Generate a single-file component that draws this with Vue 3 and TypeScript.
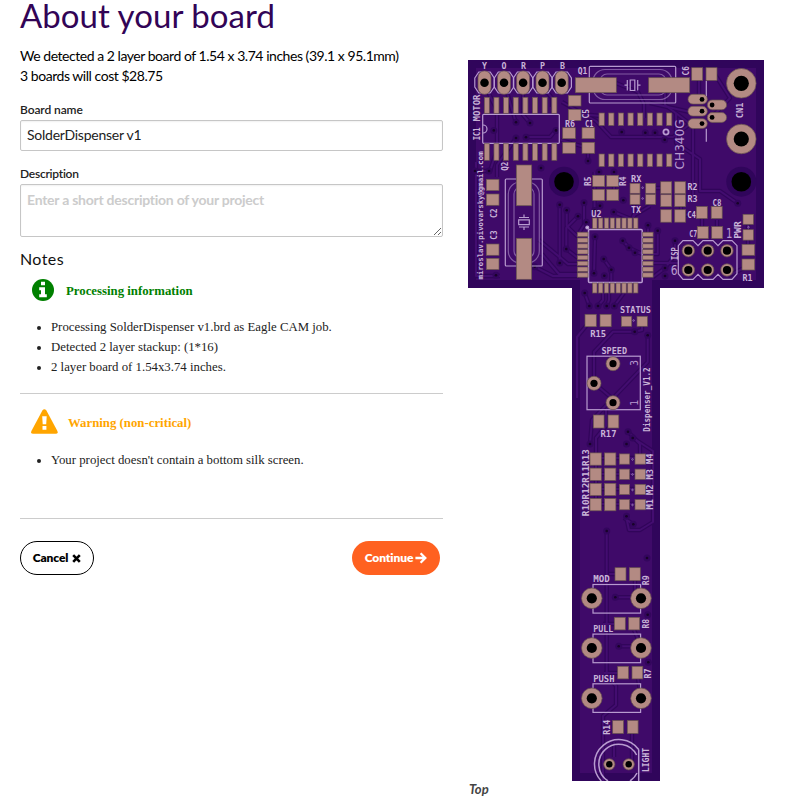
<script setup lang="ts">
import { ref } from 'vue'

const boardName = ref('SolderDispenser v1')
const description = ref('')
const information: string[] = [
  'Processing SolderDispenser v1.brd as Eagle CAM job.',
  'Detected 2 layer stackup: (1*16)',
  '2 layer board of 1.54x3.74 inches.',
]

type Box = [number, number, number, number]
const range = (n: number) => Array.from({ length: n }, (_, i) => i)

// Rectangular surface pads: x, y, width, height
const pads: Box[] = [
  ...range(8).flatMap((i): Box[] => [
    [484.3 + i * 9.65, 97.3, 5, 16], [484.3 + i * 9.65, 143.7, 5, 16.6],
    [599 + i * 9.65, 113, 5.3, 12.5], [599 + i * 9.65, 154, 5.3, 12.6],
    [592.6 + i * 5.85, 218, 4.4, 10.6], [592.6 + i * 5.85, 283, 4.4, 10],
    [577.3, 232.2 + i * 5.8, 10.7, 4.4], [642.7, 232.2 + i * 5.8, 10.4, 4.4],
  ]),
  ...range(4).flatMap((i): Box[] => [
    [590, 452.9 + i * 15.2, 11.3, 12.3], [604.6, 452.9 + i * 15.2, 11.3, 12.3],
    [619.3, 453.9 + i * 15.2, 10.3, 10.3], [635, 453.9 + i * 15.2, 10.6, 10.3],
  ]),
  [575.3, 77.7, 41, 15], [648.7, 77.7, 41, 15],
  [516.3, 165, 15.4, 40.7], [516.3, 238.3, 15.4, 41],
  [568.3, 95.3, 12.7, 10.7], [568.3, 109.3, 12.7, 11.3],
  [562.7, 127.7, 12.7, 11], [562.7, 142.3, 12.7, 11],
  [582, 127.7, 12.7, 11], [582, 142.3, 12.7, 11],
  [691.7, 67.7, 11, 12.7], [706, 67.7, 11, 12.7],
  [486.3, 179.3, 12.7, 11.3], [486.3, 194, 12.7, 11.3],
  [486.3, 244, 12.7, 11.3], [486.3, 258.3, 12.7, 11.3],
  [592.7, 175.3, 12, 11.3], [606.7, 175.3, 12, 11.3],
  [592.7, 189.3, 12, 11.3], [606.7, 189.3, 12, 11.3],
  [630, 183.3, 10, 10], [645.7, 183.3, 10, 10],
  [630, 194.4, 10, 10], [645.7, 194.4, 10, 10],
  [660.7, 181.7, 11, 12], [674.7, 181.7, 11, 12],
  [660.7, 194.7, 11, 12], [674.7, 194.7, 11, 12],
  [660.7, 209.7, 11, 12.5], [674.7, 209.7, 11, 12.5],
  [696.3, 206.5, 11, 12], [711.2, 206.5, 11, 12],
  [697.3, 226.6, 11, 12], [711.7, 226.6, 11, 12],
  [743, 214.3, 10.4, 10], [743, 229.7, 10.4, 10.4],
  [742, 244.3, 12.7, 11], [742, 259, 12.7, 11],
  [585, 314.3, 11.3, 12.4], [600, 314.3, 11.2, 12.4],
  [621.3, 316.3, 10.4, 10], [637, 316.3, 10.4, 10],
  [593.3, 415, 10.8, 13], [608, 415, 10.8, 13],
  [615, 567.7, 11, 13], [629.3, 567.7, 11, 13],
  [614.3, 617.3, 11, 12.6], [628.7, 617.3, 11, 12.6],
  [617.7, 666.3, 10.8, 12.6], [632, 666.3, 10.8, 12.6],
  [612.7, 720.5, 10.8, 13], [627.3, 720.5, 10.8, 13],
]

// Plated holes: cx, cy, ring radius, hole radius
const rings: Box[] = [
  [741.3, 83.3, 14.8, 7.6], [741.3, 139, 14.8, 7.6],
  ...[688.3, 707.7, 727].flatMap((x): Box[] => [[x, 250.7, 6.2, 4.1], [x, 270, 6.2, 4.1]]),
  [613, 363.7, 7, 3.6], [594, 383.3, 7, 3.6], [613, 402.7, 7, 3.6],
  ...[598.3, 648, 698.3].flatMap((y): Box[] => [[591.8, y, 10.3, 5.1], [641, y, 10.3, 5.1]]),
  [609.3, 764.3, 5.6, 3.2], [628.7, 764.3, 5.6, 3.2],
]
const motorPins = [484.5, 504, 523.1, 542.5, 561.7]
const usbPads: Box[] = [
  [688, 94.3, 702, 99.4], [688, 106.3, 702, 111.2], [688, 118.7, 702, 123.6],
  [707.3, 100, 712.1, 105], [707.3, 112.6, 712.1, 117.4],
]

const vias: [number, number][] = [
  [493.8, 130.4], [516, 122.3], [530, 123], [516, 138], [526, 137.3], [556, 130.4],
  [588, 161], [541, 168], [599, 172], [614, 172], [489, 171], [621.7, 132], [645.3, 132.7], [655, 132.7],
  [664.7, 139.7], [559.7, 204.7], [566.7, 210.3], [584, 202.7], [600, 205.7], [613.7, 212], [578, 216.3],
  [586.3, 222.3], [594.6, 210.5], [595, 236.7], [566.3, 249], [559.7, 263], [534.7, 266.7], [603.7, 259],
  [611.3, 269.7], [594, 273.3], [604.3, 275.7], [496, 275.3], [622.7, 240.7], [629, 247.7], [635, 252.7],
  [648, 225.3], [657.7, 230.7], [675, 240.7], [665, 268], [665, 276], [623.3, 200.3],
  [737.7, 203.3], [584.7, 293], [589.3, 306], [598, 306], [606.7, 306], [614.3, 306], [634.7, 331.7],
  [647.7, 335.3], [628, 431.7], [632.7, 438], [626.5, 444], [590, 444], [626.5, 516.3], [633.3, 524.3],
  [606.7, 531], [647, 558], [647.7, 614.7], [648.3, 662.3], [615.3, 597.3], [618.7, 646.3], [475, 171],
]

const traces: string[] = [
  'M482 80L497 110V150L490 171H475', 'M504 82L516 123', 'M523 90V115L530 123', 'M542 86L552 98V107',
  'M516 138L497 165V177', 'M526 137H550L556 130', 'M561 140L588 148V161', 'M562 102L596 121L611 137H673L689 125',
  'M616 83L638 92L644 104V118', 'M650 103L690 112', 'M579 114L601 116', 'M476 162V276H500',
  'M559.7 204.7V263', 'M566.7 210.3V226L578 237', 'M584 202.7V225L579 233', 'M578 216.3L566.3 228V249L578 258',
  'M542 254L559 274H579', 'M539 240L568 264H579', 'M534.7 266.7L553 276H579', 'M594.6 172V210.5',
  'M614 172V194', 'M613.7 212L631 219', 'M595 236.7L594 273', 'M603.7 259L611.3 269.7V281',
  'M622.7 240.7L629 247.7L642 254', 'M635 252.7H642', 'M648 225.3V235', 'M657.7 230.7V254H649', 'M665 268L653 277',
  'M675 240.7V255L665 268', 'M653 263L679 263', 'M656 188H671', 'M681 200V211', 'M684 215L697 213',
  'M702 218V230', 'M717 220V231', 'M748 225V251', 'M748 266L728 276', 'M737.7 203.3L720 191H700V159L676 143V113',
  'M665 90V105L693 126V202', 'M714 73L730 98L712 117', 'M699 80V98', 'M634 205V217', 'M650 206L633 216V224',
  'M584.7 293L589.3 306', 'M603 293V300L598 306', 'M609 293V300L606.7 306', 'M624 293L614.3 306',
  'M591 320L577 337V398', 'M642 322V330L634.7 331.7H613L594 352V383L613 399', 'M647.7 335.3V362L592 420L590 444',
  'M606 410V426L596 438V503', 'M628 431.7L640 444V454', 'M633 438L653 451V522L640 530H629L626 516',
  'M596 458H644M596 474H645M596 489H644M596 504H645', 'M606.7 531V675L616 686V705L603 716V781',
  'M633.3 524.3L624 518', 'M615.3 597.3H642', 'M618.7 646.3H642', 'M635 580V598', 'M634 630L642 648',
  'M638 678L641 698', 'M632 733V765', 'M617 574H609M614 624H603M618 673H604', 'M614 742V757',
]

interface Label { t: string; x: number; y: number; w: number; r?: boolean; s?: number }
const L = (t: string, x: number, y: number, w: number, r = false, s = 8): Label => ({ t, x, y, w, r, s })
const labels: Label[] = [
  L('Y', 482, 68.6, 5), L('O', 501.5, 68.6, 5), L('R', 521, 68.6, 5), L('P', 540, 68.6, 5), L('B', 560, 68.6, 5),
  L('Q1', 577.7, 73.6, 9.6), L('R6', 565, 127, 10), L('C1', 585, 127, 8.5), L('MOTOR', 479.5, 121.5, 27, true),
  L('IC1', 480, 140.3, 13, true), L('miroslav.pivovarsky@gmail.com', 483, 279.4, 128, true, 7.5),
  L('C5', 589, 118.5, 9.5, true), L('Q2', 508, 170.7, 9, true), L('C6', 688.5, 75.4, 9.4, true),
  L('CN1', 743, 118.2, 15.5, true), L('C2', 496.5, 218, 9.6, true), L('C3', 496.8, 239.7, 9.2, true),
  L('R5', 591, 186, 9.5, true), L('R4', 626, 186, 9.5, true), L('RX', 631, 182.2, 10.4), L('TX', 631, 213.3, 10),
  L('R2', 687.4, 189.5, 10), L('R3', 687.4, 202.2, 10), L('C4', 687.2, 218.4, 8.8), L('C8', 712.5, 206.2, 9),
  L('C7', 689.3, 236.5, 8), L('ISP', 678, 260, 12.7, true), L('PWR', 741, 238.7, 17.4, true), L('R1', 742.5, 280.8, 10),
  L('U2', 591.3, 217.2, 10.2), L('STATUS', 620, 313.2, 30.8), L('R15', 590.2, 337.2, 16), L('SPEED', 601.5, 354.2, 25.6),
  L('R17', 600.5, 436.8, 16), L('Dispenser_V1.2', 650.2, 431.7, 64.4, true), L('R10R12R11R13', 588.5, 516.2, 67, true),
  L('M1', 653.4, 509.5, 10.5, true), L('M2', 653.4, 494.9, 10.5, true), L('M3', 653.4, 479.5, 10.5, true),
  L('M4', 653.4, 464, 10.5, true), L('MOD', 593.2, 582.2, 16.6), L('R9', 648.8, 585.2, 9.8, true),
  L('PULL', 593.2, 631.9, 20), L('R8', 648.8, 628.5, 9.6, true), L('PUSH', 593.2, 682, 21.3),
  L('R7', 651.2, 678.4, 10, true), L('R14', 610, 734.8, 15, true), L('LIGHT', 649, 772, 24, true),
]
const thinLabels: Label[] = [
  L('CH340G', 683.5, 169.4, 50, true, 12.5), L('1', 726, 238.4, 6.5, false, 14), L('6', 670.8, 274.6, 6.8, false, 14),
  L('3', 638, 366, 6, true, 11), L('1', 638, 405.8, 6, true, 11),
]
</script>

<template>
  <main class="page">
    <section class="details">
      <h1>About your board</h1>
      <div class="summary">
        <div>We detected a 2 layer board of 1.54 x 3.74 inches (39.1 x 95.1mm)</div>
        <div>3 boards will cost $28.75</div>
      </div>
      <label for="name">Board name</label>
      <input id="name" v-model="boardName" class="field" type="text" />
      <label for="description" class="desc-label">Description</label>
      <textarea id="description" v-model="description" class="field" placeholder="Enter a short description of your project"></textarea>

      <h2>Notes</h2>
      <div class="note info">
        <div class="note-head">
          <svg class="info-icon" viewBox="0 0 22 22">
            <circle cx="11" cy="11" r="11" fill="green" />
            <path d="M9 2.7h4v3.6H9zM7.2 8.2H13v7h1.8v3H7.2v-3H9v-4H7.2z" fill="#fff" />
          </svg>
          <strong>Processing information</strong>
        </div>
        <ul><li v-for="line in information" :key="line">{{ line }}</li></ul>
      </div>
      <div class="note warning">
        <div class="note-head">
          <svg class="warn-icon" viewBox="0 0 27 25">
            <path d="M11.4 1.6Q13.4-1.2 15.4 1.6L26.4 22Q27.4 24.7 24.6 24.8H2.2Q-.6 24.7.4 22Z" fill="orange" />
            <path d="M11.2 7.3h4.5l-.5 8h-3.5zM11.5 17h3.9v3.7h-3.9z" fill="#fff" />
          </svg>
          <strong>Warning (non-critical)</strong>
        </div>
        <ul><li>Your project doesn't contain a bottom silk screen.</li></ul>
      </div>
      <div class="actions">
        <button class="cancel" type="button">
          <span>Cancel</span>
          <svg width="9" height="9" viewBox="0 0 9 9"><path d="M1.2 1.2l6.6 6.6M7.8 1.2L1.2 7.8" stroke="currentColor" stroke-width="2.6" /></svg>
        </button>
        <button class="continue" type="button">
          <span>Continue</span>
          <svg width="12" height="12" viewBox="0 0 12 12"><path d="M.4 6h9.4M5.6 1.3L10.3 6l-4.7 4.7" fill="none" stroke="currentColor" stroke-width="2.3" /></svg>
        </button>
      </div>
    </section>

    <figure class="preview">
      <svg class="board" viewBox="468 60 296 721">
        <path d="M468 60H764V288H660V781H572V288H468Z" fill="#30055b" />
        <path d="M476 68H756V280H652V773H580V280H476Z" fill="#3f0a69" />
        <circle cx="564" cy="181.7" r="15" fill="#30055b" /><circle cx="741.3" cy="181.7" r="15" fill="#30055b" />
        <g class="traces">
          <path v-for="(d, i) in traces" :key="'o' + i" :d="d" stroke="#31055a" stroke-width="4.4" />
          <path v-for="(d, i) in traces" :key="'i' + i" :d="d" stroke="#430d70" stroke-width="2" />
        </g>
        <g v-for="([x, y], i) in vias" :key="'v' + i">
          <circle :cx="x" :cy="y" r="3.5" fill="#33065d" /><circle :cx="x" :cy="y" r="1.3" fill="#180329" />
        </g>

        <g class="silk">
          <path v-for="x in motorPins" :key="'m' + x" :d="`M${x - 9.7} 78l4-6h11.4l4 6v9l-4 6h-11.4l-4-6z`" />
          <rect x="482.7" y="114.3" width="76.6" height="29" rx="1" />
          <path d="M483 125a4 4 0 0 1 0 8" />
          <rect x="589.3" y="66.3" width="86.4" height="36.7" rx="1" />
          <rect x="505.3" y="179" width="37" height="87" rx="1" />
          <g opacity=".55"><rect x="593" y="69.5" width="79" height="30" rx="12" /><rect x="600" y="74" width="66" height="21" rx="7" />
            <rect x="508.3" y="182" width="31" height="81" rx="12" /><rect x="514" y="187" width="20" height="71" rx="7" /></g>
          <path d="M627.3 80v10.5M637.7 80v10.5M630.2 80h4.6v10.5h-4.6zM624.5 85.2h2.8M637.7 85.2h2.8M519 217.5h10M519 227h10M518.7 219.8h10.6v4.9h-10.6zM524 214.5v3M524 227v3" />
          <rect x="588.5" y="229.4" width="53.7" height="53" rx="1" stroke-width="1.5" />
          <path d="M706.3 81v19M706.3 128.7v13" />
          <circle cx="666" cy="132" r="2.6" stroke-width="1.8" /><circle cx="587.3" cy="227.6" r="1.4" fill="#d4c3df" />
          <path d="M683 240.7h10l5 5 5-5h10l5 5 5-5h9l5 5v28l-5 5.6h-9l-5-5-5 5h-10l-5-5-5 5h-10l-4.7-5.6v-28z" />
          <rect x="587" y="356.2" width="53.3" height="53.5" />
          <rect v-for="y in [584.5, 634.1, 683.8]" :key="'s' + y" x="593" :y="y" width="47.6" height="28.6" />
          <path d="M638.7 749.5A24.5 24.5 0 1 0 601.3 781M638.7 749.5V781M636.6 755A20 20 0 1 0 608 781M637 773A20 20 0 0 1 630 781" stroke-width="1.5" />
          <circle v-for="p in [[642.6, 187.7], [642.6, 198.5], [748.5, 227.2], [633.6, 320.5], [632.5, 459.5], [632.5, 474.5], [632.5, 490], [632.5, 505]]" :key="p.join()" :cx="p[0]" :cy="p[1]" r=".8" stroke-width=".6" />
        </g>

        <g class="pads">
          <rect v-for="([x, y, w, h], i) in pads" :key="'p' + i" :x="x" :y="y" :width="w" :height="h" />
          <rect v-for="x in motorPins" :key="'q' + x" :x="x - 6.5" y="70.9" width="13" height="23.4" rx="6.5" />
          <rect v-for="([x, y], i) in usbPads" :key="'u' + i" :x="x" :y="y" width="19.3" height="9.8" rx="4.9" />
          <circle v-for="([x, y, r], i) in rings" :key="'r' + i" :cx="x" :cy="y" :r="r" />
        </g>
        <g fill="#000">
          <circle v-for="x in motorPins" :key="'h' + x" :cx="x" cy="82.7" r="4.3" />
          <circle v-for="([, , x, y], i) in usbPads" :key="'w' + i" :cx="x" :cy="y" r="2.4" />
          <circle v-for="([x, y, , r], i) in rings" :key="'k' + i" :cx="x" :cy="y" :r="r" />
          <circle cx="564" cy="181.7" r="9.8" /><circle cx="741.3" cy="181.7" r="9.8" />
        </g>
        <g class="labels">
          <text v-for="(l, i) in labels" :key="'l' + i" :transform="`translate(${l.x} ${l.y})${l.r ? ' rotate(-90)' : ''}`" :font-size="l.s" :textLength="l.w" lengthAdjust="spacingAndGlyphs">{{ l.t }}</text>
        </g>
        <g class="labels thin">
          <text v-for="(l, i) in thinLabels" :key="'t' + i" :transform="`translate(${l.x} ${l.y})${l.r ? ' rotate(-90)' : ''}`" :font-size="l.s" :textLength="l.w" lengthAdjust="spacingAndGlyphs">{{ l.t }}</text>
        </g>
      </svg>
      <figcaption>Top</figcaption>
    </figure>
  </main>
</template>

<style>
body { background: #fff; }
</style>

<style scoped>
.page { display: flex; gap: 25px; height: 797px; padding-left: 20px; box-sizing: border-box; font-family: Lato, "Liberation Sans", sans-serif; color: #111; }
.details { width: 423px; flex: none; display: flex; flex-direction: column; }
h1 { margin: 0; height: 46px; font-size: 33px; line-height: 31px; font-weight: 400; color: #320456; letter-spacing: 0.05px; white-space: nowrap; }
.summary { height: 56px; font-size: 14px; line-height: 20px; color: #000; white-space: nowrap; letter-spacing: -0.46px; }
label { font-size: 12px; line-height: 16px; font-weight: 600; color: #222; letter-spacing: -0.1px; }
.field { display: block; width: 423px; box-sizing: border-box; border: 1px solid #c6c6c6; border-radius: 2px; padding: 4px 6px 6px; font: 14px/17px Lato, sans-serif; letter-spacing: -0.25px; color: #222; background: #fff; outline: none; box-shadow: inset 0 1px 2px rgba(0, 0, 0, .06); }
input.field { height: 31px; margin-top: 2px; }
.desc-label { margin-top: 15px; letter-spacing: -0.25px; }
textarea.field { height: 53px; margin-top: 2px; resize: vertical; padding-top: 6px; }
textarea::placeholder { color: #ccc; font-weight: 700; opacity: 1; }
h2 { margin: 12px 0 0; height: 20px; font-size: 16px; line-height: 20px; font-weight: 400; letter-spacing: .4px; color: #111; }
.note { box-sizing: border-box; border-bottom: 1px solid #ccc; font-family: "Liberation Serif", serif; font-size: 12.8px; line-height: 20px; }
.note-head { display: flex; align-items: center; }
.info { height: 125px; color: green; padding-top: 10px; }
.info .note-head { gap: 12px; padding-left: 12px; }
.info strong { padding-top: 2px; }
.info-icon { width: 22px; height: 22px; }
.warning { height: 125px; padding-top: 15px; color: orange; }
.warning .note-head { gap: 10px; padding-left: 11px; }
.warning strong { padding-top: 2px; }
.warn-icon { width: 27px; height: 25px; }
ul { margin: 16px 0 0; padding-left: 31px; color: #222; }
.warning ul { margin-top: 16px; }
.actions { display: flex; justify-content: space-between; padding: 22px 3px 0 0; }
button { height: 34px; display: flex; align-items: center; justify-content: center; box-sizing: border-box; border-radius: 17px; padding: 0; font: 800 12px Lato, sans-serif; letter-spacing: -0.1px; }
button span { padding-bottom: 2px; }
.cancel { width: 74px; gap: 4px; background: #fff; color: #000; border: 1px solid #000; }
.continue { width: 88px; gap: 2px; background: #ff6120; color: #fff; border: 0; }
.preview { margin: 60px 0 0; width: 296px; flex: none; }
.board { display: block; width: 296px; height: 721px; }
.traces path { fill: none; stroke-linejoin: round; }
.silk { fill: none; stroke: #b89bd0; stroke-width: 1.2; }
.pads { fill: #b38a83; stroke: #68534f; stroke-width: .7; }
.labels { font-family: "DejaVu Sans Mono", monospace; font-weight: 700; fill: #c9b4d8; }
.thin { font-family: "DejaVu Sans", sans-serif; font-weight: 400; fill: #b89bd0; }
figcaption { padding: 1px 0 0 1px; font-size: 13px; line-height: 15px; font-weight: 700; font-style: italic; color: #444; }
</style>
